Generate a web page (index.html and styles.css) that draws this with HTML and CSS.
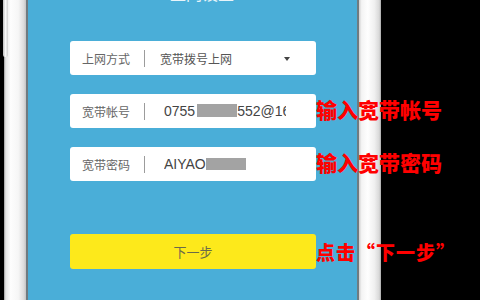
FILE: index.html
```html
<!DOCTYPE html>
<html lang="zh-CN">
<head>
  <meta charset="UTF-8" />
  <meta name="viewport" content="width=device-width, initial-scale=1.0"/>
  <title>宽带上网</title>
  <link rel="stylesheet" href="styles.css">
</head>
<body>

  <div class="stage">
    <div class="side-key"></div>
    <div class="bezel-left"></div>

    <div class="screen">
      <div class="titulo">上网设置</div>

      <div class="campo">
        <span class="rotulo">上网方式</span>
        <span class="sep"></span>
        <span class="valor">宽带拨号上网</span>
        <span class="seta"></span>
      </div>

      <div class="campo">
        <span class="rotulo">宽带帐号</span>
        <span class="sep"></span>
        <span class="valor entrada">0755<i class="borrao b1"></i>552@163.com</span>
      </div>

      <div class="campo">
        <span class="rotulo">宽带密码</span>
        <span class="sep"></span>
        <span class="valor entrada">AIYAO<i class="borrao b2"></i></span>
      </div>

      <button class="botao">下一步</button>
    </div>

    <div class="bezel-right"></div>

    <div class="nota n1">输入宽带帐号</div>
    <div class="nota n2">输入宽带密码</div>
    <div class="nota n3">点击“下一步”</div>
  </div>

</body>
</html>
```

FILE: styles.css
```css
    body {
      background: #000;
      font-family: 'Liberation Sans', 'Noto Sans CJK SC', sans-serif;
      margin: 0;
      width: 480px;
      height: 300px;
      overflow: hidden;
    }

    .stage {
      display: flex;
      height: 300px;
      position: relative;
    }

    .bezel-left {
      width: 22px;
      margin-left: 4px;
      background: linear-gradient(to right, #9a9a9a 0%, #e6e6e6 8%, #fdfdfd 30%, #f6f6f6 65%, #dcdcdc 90%, #c4c4c4 100%);
      border-right: 2px solid #6f7b80;
    }

    .side-key {
      position: absolute;
      left: 3px;
      top: 0;
      width: 5px;
      height: 57px;
      background: linear-gradient(to right, #bdbdbd, #f7f7f7 50%, #d0d0d0);
      border-radius: 0 0 2px 2px;
    }

    .screen {
      width: 329px;
      box-sizing: border-box;
      padding: 0 41px 0 42px;
      background: #4aaed8;
    }

    .bezel-right {
      width: 22px;
      border-left: 2px solid #6f7b80;
      background: linear-gradient(to right, #cfcfcf 0%, #f4f4f4 12%, #fefefe 40%, #f0f0f0 70%, #d8d8d8 92%, #a8a8a8 100%);
    }

    .titulo {
      margin: -13px 0 38px;
      padding-left: 18px;
      height: 16px;
      line-height: 16px;
      font-size: 16px;
      color: #e8f4fa;
      text-align: center;
    }

    .campo {
      display: flex;
      align-items: center;
      height: 34px;
      margin-bottom: 19px;
      padding: 0 30px 0 12px;
      background: #fff;
      border-radius: 3px;
      position: relative;
    }

    .rotulo {
      width: 50px;
      flex: none;
      font-size: 12px;
      color: #666;
    }

    .sep {
      flex: none;
      width: 1px;
      height: 17px;
      margin-left: 12px;
      background: #9c9c9c;
    }

    .valor {
      margin-left: 15px;
      font-size: 12px;
      color: #555;
      white-space: nowrap;
      overflow: hidden;
    }

    .entrada {
      margin-left: 19px;
      font-size: 14px;
      color: #444;
      line-height: 18px;
    }

    .borrao {
      display: inline-block;
      vertical-align: -1px;
      height: 13px;
      background: #a3a3a3;
    }

    .b1 {
      width: 40px;
      margin: 0 0 0 2px;
    }

    .b2 {
      width: 40px;
      height: 12px;
    }

    .seta {
      position: absolute;
      right: 26px;
      top: 16px;
      border-left: 3px solid transparent;
      border-right: 3px solid transparent;
      border-top: 4px solid #444;
    }

    .botao {
      display: block;
      width: 100%;
      height: 35px;
      margin-top: 53px;
      border: none;
      border-radius: 3px;
      background: #fde91b;
      font-family: 'Noto Sans CJK SC', sans-serif;
      font-size: 13px;
      color: #6a6a4a;
    }

    .nota {
      position: absolute;
      left: 316px;
      font-family: 'Noto Sans CJK SC', sans-serif;
      font-weight: 900;
      color: #ff0000;
      line-height: 1;
      white-space: nowrap;
    }

    .n1, .n2 {
      font-size: 21px;
    }

    .n1 {
      top: 99px;
    }

    .n2 {
      top: 152px;
    }

    .n3 {
      top: 242px;
      font-size: 19px;
      letter-spacing: 1px;
    }
```
